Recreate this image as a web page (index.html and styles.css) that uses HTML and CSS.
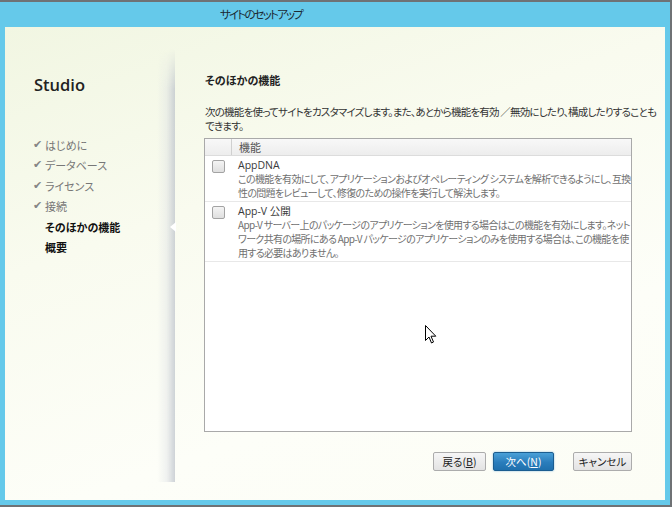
FILE: index.html
```html
<!DOCTYPE html>
<html lang="ja">
<head>
    <meta charset="UTF-8">
    <title>サイトのセットアップ</title>
    <link rel="stylesheet" href="styles.css">
</head>
<body>

<div class="frame">
    <div class="titlebar">サイトのセットアップ</div>

    <div class="content">
        <aside class="sidebar">
            <div class="brand">Studio</div>
            <ul class="steps">
                <li class="done">はじめに</li>
                <li class="done">データベース</li>
                <li class="done">ライセンス</li>
                <li class="done">接続</li>
                <li class="current">そのほかの機能</li>
                <li class="todo">概要</li>
            </ul>
        </aside>

        <main class="panel">
            <h2>そのほかの機能</h2>
            <p class="intro">次の機能を使ってサイトをカスタマイズします。また、あとから機能を有効 ／無効にしたり、構成したりすることも<br>できます。</p>

            <div class="grid">
                <div class="grid-head">
                    <div class="col-check"></div>
                    <div class="col-name">機能</div>
                </div>
                <div class="grid-row">
                    <div class="col-check"><span class="box"></span></div>
                    <div class="col-name">
                        <div class="feat">AppDNA</div>
                        <div class="desc">この機能を有効にして、アプリケーションおよびオペレーティング システムを解析できるようにし、互換<br>性の問題をレビューして、修復のための操作を実行して解決します。</div>
                    </div>
                </div>
                <div class="grid-row">
                    <div class="col-check"><span class="box"></span></div>
                    <div class="col-name">
                        <div class="feat">App-V 公開</div>
                        <div class="desc">App-V サーバー上のパッケージのアプリケーションを使用する場合はこの機能を有効にします。ネット<br>ワーク共有の場所にある App-V パッケージのアプリケーションのみを使用する場合は、この機能を使<br>用する必要はありません。</div>
                    </div>
                </div>
            </div>

            <div class="buttons">
                <button class="btn back">戻る(<u>B</u>)</button>
                <button class="btn next">次へ(<u>N</u>)</button>
                <button class="btn cancel">キャンセル</button>
            </div>

            <svg class="cursor" width="12" height="20" viewBox="0 0 12 20">
                <path d="M0.5 0.5 L0.5 15.5 L4 12 L6.5 18 L8.5 17 L6 11.2 L10.8 11.2 Z" fill="#fff" stroke="#000" stroke-width="1"/>
            </svg>
        </main>
    </div>
</div>

</body>
</html>
```

FILE: styles.css
```css
/* Site setup wizard */
body {
    margin: 0;
    padding: 2px 0 0 0;
    background-color: #6f7275;
    font-family: "Noto Sans CJK JP", sans-serif;
    font-feature-settings: "palt";
    font-size: 11px;
    color: #1e1e1e;
    height: 505px;
    overflow: hidden;
}
.frame {
    width: 670px;
    height: 503px;
    background-color: #65c9ea;
    box-sizing: border-box;
    padding: 0 5px 5px 5px;
    display: flex;
    flex-direction: column;
}
.titlebar {
    height: 25px;
    line-height: 24px;
    width: 512px;
    text-align: center;
    font-size: 11.5px;
    color: #1c2a33;
    letter-spacing: -1.8px;
}
.content {
    flex: 1;
    display: flex;
    background: linear-gradient(160deg, #f1f6e2 0%, #f9fbef 35%, #fdfef8 70%, #fcfdf5 100%);
}
.sidebar {
    width: 170px;
    position: relative;
    flex-shrink: 0;
}
.sidebar::after {
    content: "";
    position: absolute;
    right: 0;
    top: 22px;
    bottom: 18px;
    width: 18px;
    background: linear-gradient(to right, rgba(225,228,232,0) 0%, rgba(214,218,224,.35) 55%, rgba(190,196,204,.75) 100%);
    -webkit-mask-image: linear-gradient(to bottom, transparent 0, #000 40px, #000 100%);
}
.brand {
    font-family: "Open Sans", sans-serif;
    font-weight: 600;
    font-size: 16.5px;
    color: #222;
    margin: 47px 0 0 29px;
    line-height: 22px;
}
.steps {
    list-style: none;
    margin: 39px 0 0 0;
    padding: 0;
}
.steps li {
    height: 20.4px;
    line-height: 20px;
    padding-left: 40px;
    position: relative;
    color: #777;
}
.steps li.done::before {
    content: "\2714";
    position: absolute;
    left: 28px;
    top: 0;
    font-family: "DejaVu Sans", sans-serif;
    font-size: 11px;
    color: #858585;
}
.steps li.current,
.steps li.todo {
    color: #111;
    font-weight: bold;
}
.steps li.current::after {
    content: "";
    position: absolute;
    right: -1px;
    top: 5px;
    border-top: 5px solid transparent;
    border-bottom: 5px solid transparent;
    border-right: 6px solid #fff;
    z-index: 2;
}
.panel {
    flex: 1;
    position: relative;
    padding: 0 34px 0 29px;
}
.panel h2 {
    font-size: 11px;
    font-weight: bold;
    margin: 44px 0 0 1px;
    line-height: 18px;
    color: #222;
}
.intro {
    margin: 16px 0 0 1px;
    line-height: 14px;
    color: #333;
    font-size: 10.5px;
    letter-spacing: -0.78px;
    white-space: nowrap;
}
.grid {
    margin-top: 5px;
    height: 292px;
    border: 1px solid #a9a9a9;
    background: #fff;
    width: 426px;
}
.grid-head {
    display: flex;
    height: 16px;
    line-height: 16px;
    background: linear-gradient(#f8f8f8, #ededed);
    border-bottom: 1px solid #dcdcdc;
    color: #555;
}
.grid-head .col-check {
    border-right: 1px solid #d0d0d0;
}
.col-check {
    width: 26px;
    flex-shrink: 0;
}
.col-name {
    flex: 1;
    padding-left: 7px;
    padding-right: 6px;
}
.grid-row {
    display: flex;
    border-bottom: 1px solid #e8e8e8;
    padding: 2px 0 1px 0;
}
.box {
    display: block;
    width: 11px;
    height: 11px;
    margin: 2px 0 0 7px;
    border: 1px solid #a3a3a3;
    border-radius: 2px;
    background: linear-gradient(#f4f4f4, #dfdfdf);
}
.feat {
    line-height: 14px;
    font-family: "Open Sans", "Noto Sans CJK JP", sans-serif;
    font-size: 10.5px;
    color: #3a3a3a;
}
.desc {
    line-height: 14px;
    color: #707070;
    font-size: 10px;
    letter-spacing: -0.68px;
    white-space: nowrap;
}
.buttons {
    display: flex;
    justify-content: flex-end;
    margin: 20px 0 0 0;
    width: 428px;
}
.btn {
    height: 19px;
    padding: 0;
    font-family: "Noto Sans CJK JP", sans-serif;
    font-feature-settings: "palt";
    font-size: 10.5px;
    line-height: 16px;
    border: 1px solid #acacac;
    border-radius: 2px;
    background: linear-gradient(#f6f6f6, #e3e3e3);
    color: #222;
}
.btn u {
    text-decoration: underline;
}
.back {
    width: 53px;
}
.next {
    width: 61px;
    margin-left: 7px;
    color: #fff;
    border-color: #1b5d90;
    background: linear-gradient(#4aa0d8, #2a7dbc 55%, #1f70ad);
    box-shadow: 0 0 2px #7fb6dd;
}
.cancel {
    width: 59px;
    margin-left: 19px;
}
.cursor {
    position: absolute;
    left: 250px;
    top: 298px;
}
```
